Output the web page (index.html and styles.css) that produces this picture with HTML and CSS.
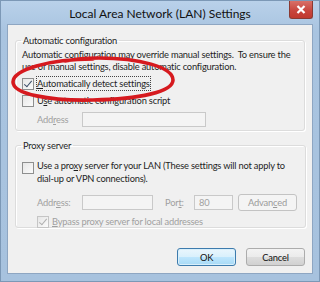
FILE: index.html
```html
<!DOCTYPE html>
<html>
<head>
<meta charset="utf-8">
<link rel="stylesheet" href="styles.css">
</head>
<body>
<div class="window">
  <div class="titlebar">
    <div class="title">Local Area Network (LAN) Settings</div>
    <div class="close"><svg width="10" height="9" viewBox="0 0 10 9"><path d="M1.5 1 L8.5 8 M8.5 1 L1.5 8" stroke="#fff" stroke-width="2.2"/></svg></div>
  </div>
  <div class="client">
    <fieldset class="group g1">
      <legend>Automatic configuration</legend>
      <p class="desc">Automatic configuration may override manual settings.&nbsp; To ensure the<br>use of manual settings, disable automatic configuration.</p>
      <label class="check"><span class="box checked"></span><span class="focus"><u>A</u>utomatically detect settings</span></label>
      <label class="check"><span class="box"></span><span>U<u>s</u>e automatic configuration script</span></label>
      <div class="row indent disabled">
        <span class="lbl1">Add<u>r</u>ess</span>
        <span class="input wide"></span>
      </div>
    </fieldset>
    <fieldset class="group g2">
      <legend>Proxy server</legend>
      <label class="check top"><span class="box"></span><span>Use a pro<u>x</u>y server for your LAN (These settings will not apply to<br>dial-up or VPN connections).</span></label>
      <div class="row indent disabled r2">
        <span class="lbl1">Addr<u>e</u>ss:</span>
        <span class="input addr"></span>
        <span class="lbl2">Por<u>t</u>:</span>
        <span class="input port">80</span>
        <span class="btn adv">Advan<u>c</u>ed</span>
      </div>
      <label class="check indent disabled"><span class="box checked dis"></span><span><u>B</u>ypass proxy server for local addresses</span></label>
    </fieldset>
    <div class="buttons">
      <span class="btn ok">OK</span>
      <span class="btn">Cancel</span>
    </div>
  </div>
  <svg class="circle" width="172" height="52" viewBox="0 0 172 52"><path d="M84 4 C40 4 4 15 4 27 C4 39 40 46 84 45 C130 44 164 37 164 25 C164 12 130 3 90 3 C78 3 66 4 56 6" fill="none" stroke="#d61a1f" stroke-width="3.6" stroke-linecap="round"/></svg>
</div>
</body>
</html>
```
FILE: styles.css
```css
* { box-sizing: border-box; }
html, body { margin: 0; padding: 0; background: #fff; }
body { font-family: Lato, "Open Sans", sans-serif; font-size: 9.3px; letter-spacing: -0.2px; color: #1e1e1e; }
.window {
  position: relative;
  width: 320px; height: 282px;
  background: linear-gradient(#b9d1ea, #a9c4e0 30px, #a7c2de);
  border: 1px solid #7c98b6;
  display: flex; flex-direction: column;
  overflow: hidden;
}
.titlebar { height: 23px; display: flex; align-items: center; justify-content: center; position: relative; }
.title { font-size: 12px; letter-spacing: 0; color: #111; padding-top: 2px; }
.close {
  position: absolute; right: 6px; top: -1px;
  width: 24px; height: 19px;
  background: linear-gradient(#d9756c, #c8453d 60%, #c0392f);
  border: 1px solid #8a3a33; border-top: none;
  border-radius: 0 0 3px 3px;
  display: flex; align-items: center; justify-content: center;
}
.client {
  flex: 1; margin: 0 6px 7px 6px;
  background: #f0f0f0;
  border: 1px solid #8ea6c2;
  padding: 9px 7px 0 7px;
  display: flex; flex-direction: column;
}
.group {
  margin: 0; padding: 2px 8px 6px 6px;
  border: 1px solid #dcdcdc;
  border-radius: 3px;
  box-shadow: inset 1px 1px 0 #fff, 1px 1px 0 #fff;
}
.group legend { padding: 0 2px; margin-left: -1px; line-height: 13px; }
.g1 { height: 97px; }
.g2 { height: 89px; margin-top: 8px; }
.desc { margin: 0 0 4px 0; line-height: 12px; }
.check { display: flex; align-items: center; gap: 3px; line-height: 13px; margin-top: 4px; }
.check.top { align-items: flex-start; margin-top: 5px; }
.check.top .box { margin-top: 3px; }
.box {
  flex: none; width: 12px; height: 12px;
  border: 1px solid #8e8f8f; background: linear-gradient(135deg, #e6e6e6, #fbfbfb);
  position: relative;
}
.box.checked::after {
  content: ""; position: absolute; left: 3px; top: 0px; width: 3px; height: 7px;
  border: solid #3b4e68; border-width: 0 1.5px 1.5px 0; transform: rotate(40deg);
}
.box.dis { border-color: #c5c5c5; }
.box.dis::after { border-color: #b0b0b0; }
.focus { outline: 1px dotted #444; outline-offset: 0; }
.indent { margin-left: 15px; }
.disabled { color: #a0a0a0; }
.row { display: flex; align-items: center; margin-top: 5px; }
.lbl1 { width: 45px; }
.input { height: 15px; border: 1px solid #c9c9c9; background: #f4f4f4; display: block; }
.input.wide { width: 124px; }
.input.addr { width: 71px; }
.lbl2 { margin-left: 12px; width: 29px; }
.input.port { width: 39px; padding-left: 4px; line-height: 13px; }
.btn {
  display: inline-flex; align-items: center; justify-content: center;
  border: 1px solid #acacac; border-radius: 3px;
  background: linear-gradient(#f3f3f3, #ebebeb 50%, #dddddd 51%, #d1d1d1);
  color: #111;
}
.adv { width: 59px; height: 17px; margin-left: 5px; color: #9a9a9a; border-color: #c3c3c3; background: #f4f4f4; }
.r2 { margin-top: 9px; }
.buttons { display: flex; justify-content: flex-end; gap: 10px; margin-top: 20px; }
.buttons .btn { width: 59px; height: 18px; }
.btn.ok { border-color: #3d7bad; background: linear-gradient(#eaf6fd, #d9f0fc 50%, #bee6fd 51%, #a7d9f5); box-shadow: inset 0 0 0 1px #d8effb; }
.circle { position: absolute; left: 8px; top: 54px; }
```
